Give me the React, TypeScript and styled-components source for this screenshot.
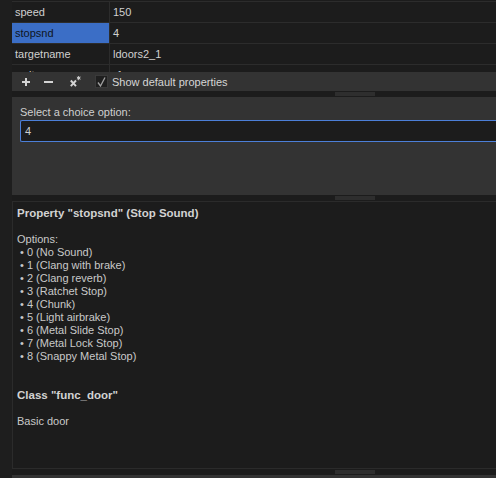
import React from "react";
import styled, { createGlobalStyle } from "styled-components";

const Global = createGlobalStyle`
  html, body { margin: 0; padding: 0; background: #1c1c1c; }
  body { width: 496px; height: 478px; overflow: hidden; font-family: "Liberation Sans", Arial, sans-serif; }
  * { box-sizing: border-box; }
`;

const Shell = styled.div`
  display: flex;
  width: 496px;
  height: 478px;
  overflow: hidden;
`;

const LeftStrip = styled.div`
  width: 12px;
  flex: none;
  background: #1e1e1e;
`;

const Main = styled.div`
  flex: 1;
  display: flex;
  flex-direction: column;
  min-width: 0;
`;

const Table = styled.div`
  height: 72px;
  flex: none;
  overflow: hidden;
  background: #1c1c1c;
  padding-top: 1px;
`;

const Rows = styled.div`
  border-top: 1px solid #2c2c2c;
`;

const Row = styled.div`
  display: grid;
  grid-template-columns: 98px 1fr;
  height: 21px;
  border-bottom: 1px solid #2c2c2c;
`;

const Cell = styled.div<{ $selected?: boolean; $name?: boolean }>`
  display: flex;
  align-items: center;
  padding-left: ${(p) => (p.$name ? "3px" : "3px")};
  font-size: 11px;
  color: ${(p) => (p.$selected ? "#0f1522" : "#d0d0d0")};
  background: ${(p) => (p.$selected ? "#3b6ec6" : "transparent")};
  border-right: ${(p) => (p.$name ? "1px solid #2c2c2c" : "none")};
  white-space: nowrap;
`;

const Toolbar = styled.div`
  height: 19px;
  flex: none;
  background: #333333;
  display: flex;
  align-items: center;
  padding-left: 2px;
`;

const ToolButton = styled.div<{ $shift?: number }>`
  width: 23px;
  height: 19px;
  display: flex;
  align-items: center;
  justify-content: center;
  margin-left: ${(p) => p.$shift ?? 0}px;
`;

const Check = styled.div`
  width: 13px;
  height: 13px;
  margin-left: 8px;
  background: #1f1f1f;
  border: 1px solid #3a3a3a;
  display: flex;
  align-items: center;
  justify-content: center;
`;

const CheckLabel = styled.span`
  margin-left: 4px;
  font-size: 11px;
  color: #d6d6d6;
  white-space: nowrap;
`;

const Splitter = styled.div`
  height: 6px;
  flex: none;
  background: #1c1c1c;
  padding-top: 1px;
`;

const Handle = styled.div`
  width: 40px;
  height: 4px;
  margin-left: 323px;
  background: #2e2e2e;
`;

const ChoicePanel = styled.div`
  height: 98px;
  flex: none;
  background: #333333;
  padding: 8px 0 0 8px;
`;

const ChoiceLabel = styled.div`
  font-size: 11px;
  color: #d0d0d0;
  line-height: 14px;
  margin-bottom: 1px;
`;

const ChoiceInput = styled.div`
  height: 22px;
  margin-right: -8px;
  background: #1c1c1c;
  border: 1px solid #4c7fd8;
  border-right: none;
  border-radius: 2px 0 0 2px;
  display: flex;
  align-items: center;
  padding-left: 4px;
  font-size: 11px;
  color: #cfcfcf;
`;

const InfoPanel = styled.div`
  height: 268px;
  flex: none;
  background: #1c1c1c;
  border: 1px solid #2b2b2b;
  border-right: none;
  padding: 5px 0 0 4px;
  font-size: 11px;
  line-height: 13px;
  color: #c9c9c9;
`;

const InfoTitle = styled.div`
  font-weight: bold;
  font-size: 11.5px;
  color: #d2d2d2;
  white-space: nowrap;
`;

const Blank = styled.div<{ $lines?: number }>`
  height: ${(p) => (p.$lines ?? 1) * 13}px;
`;

const Line = styled.div`
  white-space: nowrap;
`;

const Bullet = styled.div`
  white-space: nowrap;
  padding-left: 3px;
`;

const NextPanel = styled.div`
  flex: 1;
  background: #333333;
`;

const rows = [
  { name: "speed", value: "150" },
  { name: "stopsnd", value: "4", selected: true },
  { name: "targetname", value: "ldoors2_1" },
  { name: "wait", value: "-1" },
];

const options = [
  "0 (No Sound)",
  "1 (Clang with brake)",
  "2 (Clang reverb)",
  "3 (Ratchet Stop)",
  "4 (Chunk)",
  "5 (Light airbrake)",
  "6 (Metal Slide Stop)",
  "7 (Metal Lock Stop)",
  "8 (Snappy Metal Stop)",
];

const PlusIcon = () => (
  <svg width="8" height="8" viewBox="0 0 8 8">
    <path d="M4 0v8M0 4h8" stroke="#d4d4d4" strokeWidth="2" />
  </svg>
);

const MinusIcon = () => (
  <svg width="9" height="8" viewBox="0 0 9 8">
    <path d="M0 4h9" stroke="#d4d4d4" strokeWidth="2" />
  </svg>
);

const ClearIcon = () => (
  <svg width="11" height="11" viewBox="0 0 11 11">
    <path d="M0.8 4.5l5.2 5.7M6 4.5l-5.2 5.7" stroke="#d4d4d4" strokeWidth="1.9" />
    <path d="M8.7 0v4.2M6.9 1l3.6 2.2M6.9 3.2l3.6-2.2" stroke="#d4d4d4" strokeWidth="1" />
  </svg>
);

const CheckMark = () => (
  <svg width="9" height="10" viewBox="0 0 9 10">
    <path d="M1 5.5l2.5 3.5L8 0.5" stroke="#a0a0a0" strokeWidth="1.3" fill="none" />
  </svg>
);

export default function App() {
  return (
    <>
      <Global />
      <Shell>
        <LeftStrip />
        <Main>
          <Table>
            <Rows>
              {rows.map((r) => (
                <Row key={r.name}>
                  <Cell $name $selected={r.selected}>{r.name}</Cell>
                  <Cell>{r.value}</Cell>
                </Row>
              ))}
            </Rows>
          </Table>
          <Toolbar>
            <ToolButton><PlusIcon /></ToolButton>
            <ToolButton><MinusIcon /></ToolButton>
            <ToolButton $shift={4}><ClearIcon /></ToolButton>
            <Check><CheckMark /></Check>
            <CheckLabel>Show default properties</CheckLabel>
          </Toolbar>
          <Splitter><Handle /></Splitter>
          <ChoicePanel>
            <ChoiceLabel>Select a choice option:</ChoiceLabel>
            <ChoiceInput>4</ChoiceInput>
          </ChoicePanel>
          <Splitter><Handle /></Splitter>
          <InfoPanel>
            <InfoTitle>Property "stopsnd" (Stop Sound)</InfoTitle>
            <Blank />
            <Line>Options:</Line>
            {options.map((o) => (
              <Bullet key={o}>• {o}</Bullet>
            ))}
            <Blank $lines={2} />
            <InfoTitle>Class "func_door"</InfoTitle>
            <Blank />
            <Line>Basic door</Line>
          </InfoPanel>
          <Splitter><Handle /></Splitter>
          <NextPanel />
        </Main>
      </Shell>
    </>
  );
}
